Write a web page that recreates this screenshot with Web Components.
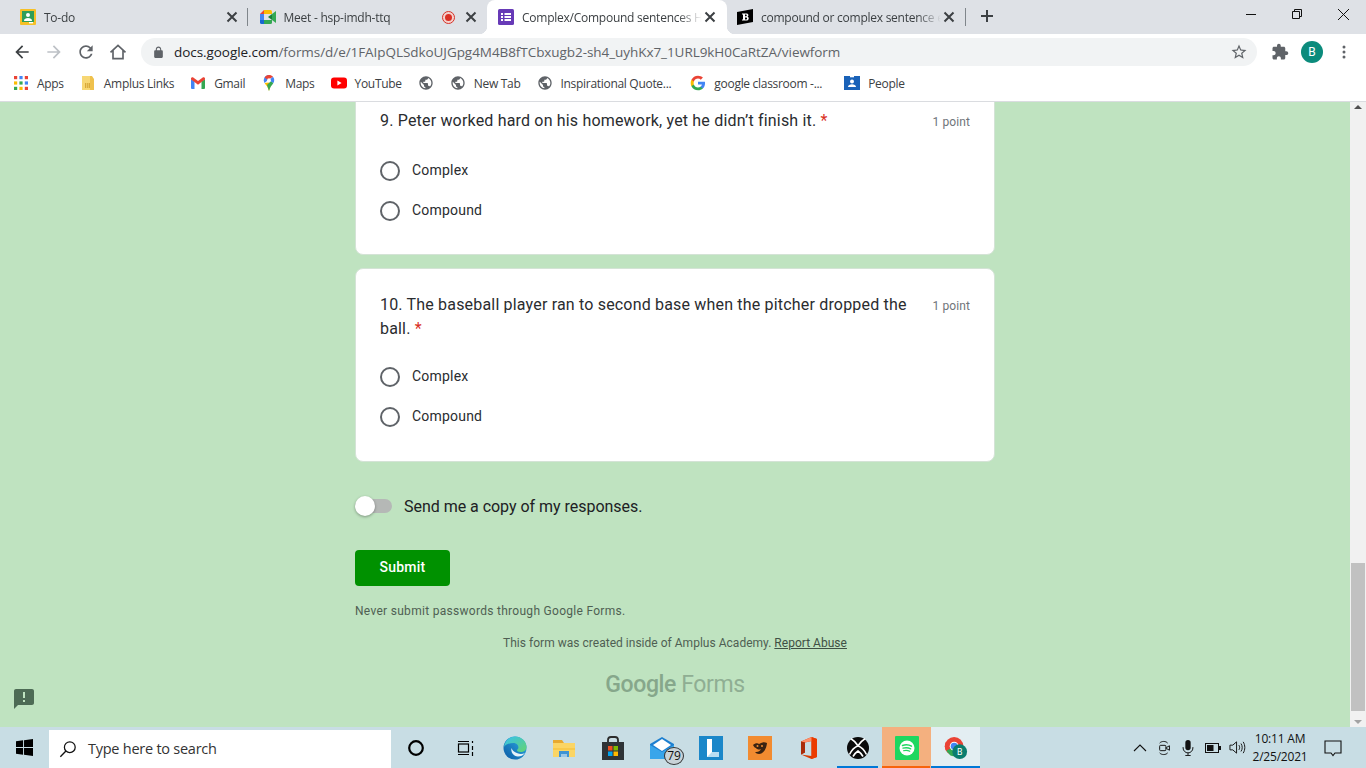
<!DOCTYPE html>
<html>
<head>
<meta charset="utf-8">
<title>Complex/Compound sentences</title>
<style>
    html, body { margin: 0; height: 100%; overflow: hidden; }
    body { display: flex; flex-direction: column; height: 768px; font-family: "Open Sans", "Liberation Sans", sans-serif; }
</style>
</head>
<body>
<tab-strip>
    <chrome-tab icon="classroom">To-do</chrome-tab>
    <chrome-tab icon="meet" recording hidesep>Meet - hsp-imdh-ttq</chrome-tab>
    <chrome-tab icon="forms" active hidesep>Complex/Compound sentences Homework</chrome-tab>
    <chrome-tab icon="brainly" tight>compound or complex sentence examples</chrome-tab>
</tab-strip>
<chrome-toolbar></chrome-toolbar>
<bookmark-bar>
    <bookmark-item icon="apps">Apps</bookmark-item>
    <bookmark-item icon="doc">Amplus Links</bookmark-item>
    <bookmark-item icon="gmail">Gmail</bookmark-item>
    <bookmark-item icon="maps">Maps</bookmark-item>
    <bookmark-item icon="youtube">YouTube</bookmark-item>
    <bookmark-item icon="globe"></bookmark-item>
    <bookmark-item icon="globe">New Tab</bookmark-item>
    <bookmark-item icon="globe">Inspirational Quote...</bookmark-item>
    <bookmark-item icon="google" pad>google classroom -...</bookmark-item>
    <bookmark-item icon="people">People</bookmark-item>
</bookmark-bar>
<form-page>
    <form-question points="1 point" first>
        <span slot="title">9. Peter worked hard on his homework, yet he didn’t finish it.</span>
        <form-radio>Complex</form-radio>
        <form-radio>Compound</form-radio>
    </form-question>
    <form-question points="1 point">
        <span slot="title">10. The baseball player ran to second base when the pitcher dropped the<br>ball.</span>
        <form-radio>Complex</form-radio>
        <form-radio>Compound</form-radio>
    </form-question>
    <form-footer></form-footer>
</form-page>
<task-bar></task-bar>

<script>
const ICONS = {
    classroom: `<svg viewBox="0 0 16 16"><rect width="16" height="16" rx="1" fill="#f6c026"/><rect x="2" y="2" width="12" height="11" fill="#2f9e58"/><circle cx="8" cy="6" r="2" fill="#fff"/><path d="M4 12c0-2.2 1.8-3 4-3s4 .8 4 3z" fill="#fff"/><rect x="9" y="13" width="4" height="1.4" fill="#fff"/></svg>`,
    meet: `<svg viewBox="0 0 16 16"><path d="M0 5 4 1v4z" fill="#ea4335"/><path d="M4 1h6.5A1.5 1.5 0 0 1 12 2.5V5H4z" fill="#fbbc04"/><path d="M0 5h4v6H0z" fill="#4285f4"/><path d="M0 11h4v4H1.5A1.5 1.5 0 0 1 0 13.500z" fill="#1967d2"/><path d="M4 11h8v2.500a1.500 1.500 0 0 1-1.500 1.500H4z" fill="#34a853"/><path d="M8 8l4-3v6z" fill="#188038"/><path d="M12 5l4-3v12l-4-3z" fill="#34a853"/></svg>`,
    forms: `<svg viewBox="0 0 16 16"><rect width="16" height="16" rx="1.500" fill="#673ab7"/><path d="M3 4h2v2H3zM6.500 4H13v2H6.500zM3 7h2v2H3zM6.500 7H13v2H6.500zM3 10h2v2H3zM6.500 10H13v2H6.500z" fill="#fff"/></svg>`,
    brainly: `<svg viewBox="0 0 16 16"><path d="M0 3 16 0v13L0 16z" fill="#000"/><path d="M5 4.500h4.500c2 0 2.600 2.400 1 3.200 2 .6 1.600 3.800-1 3.800H5v-1h1V5.500H5zm3 1v1.800h1c1 0 1-1.800 0-1.800zm0 2.900v2h1.200c1.200 0 1.200-2 0-2z" fill="#fff"/></svg>`,
    back: `<svg viewBox="0 0 24 24"><path fill="currentColor" d="M20 11H7.830l5.590-5.590L12 4l-8 8 8 8 1.410-1.410L7.830 13H20v-2z"/></svg>`,
    forward: `<svg viewBox="0 0 24 24"><path fill="currentColor" d="M12 4l-1.410 1.410L16.170 11H4v2h12.170l-5.580 5.590L12 20l8-8z"/></svg>`,
    reload: `<svg viewBox="0 0 24 24"><path fill="currentColor" d="M17.650 6.350C16.200 4.900 14.210 4 12 4c-4.420 0-7.990 3.580-7.990 8s3.570 8 7.990 8c3.730 0 6.840-2.550 7.730-6h-2.080c-.82 2.330-3.040 4-5.650 4-3.310 0-6-2.690-6-6s2.690-6 6-6c1.660 0 3.140.69 4.220 1.780L13 11h7V4l-2.350 2.350z"/></svg>`,
    home: `<svg viewBox="0 0 24 24"><path fill="none" stroke="currentColor" stroke-width="2" d="M3 12.500 12 4l9 8.500M6 10v10h12V10"/></svg>`,
    lock: `<svg viewBox="0 0 24 24"><path fill="currentColor" d="M18 8h-1V6c0-2.760-2.240-5-5-5S7 3.240 7 6v2H6c-1.100 0-2 .9-2 2v10c0 1.100.9 2 2 2h12c1.100 0 2-.9 2-2V10c0-1.100-.9-2-2-2zM9 6c0-1.660 1.340-3 3-3s3 1.340 3 3v2H9V6z"/></svg>`,
    star: `<svg viewBox="0 0 24 24"><path fill="currentColor" d="M22 9.240l-7.190-.62L12 2 9.190 8.630 2 9.240l5.460 4.730L5.820 21 12 17.270 18.180 21l-1.630-7.030L22 9.240zM12 15.400l-3.760 2.270 1-4.280-3.320-2.880 4.380-.38L12 6.100l1.710 4.040 4.380.38-3.320 2.880 1 4.280L12 15.400z"/></svg>`,
    puzzle: `<svg viewBox="0 0 24 24"><path fill="currentColor" d="M20.500 11H19V7c0-1.100-.9-2-2-2h-4V3.500C13 2.120 11.880 1 10.500 1S8 2.120 8 3.500V5H4c-1.100 0-1.990.9-1.990 2v3.800H3.500c1.490 0 2.700 1.210 2.700 2.700s-1.210 2.700-2.700 2.700H2V20c0 1.100.9 2 2 2h3.800v-1.500c0-1.490 1.210-2.700 2.700-2.700 1.490 0 2.700 1.210 2.700 2.700V22H17c1.100 0 2-.9 2-2v-4h1.500c1.380 0 2.500-1.120 2.500-2.500S21.880 11 20.500 11z"/></svg>`,
    dots: `<svg viewBox="0 0 16 16"><g fill="currentColor"><circle cx="8" cy="3" r="1.500"/><circle cx="8" cy="8" r="1.500"/><circle cx="8" cy="13" r="1.500"/></g></svg>`,
    apps: `<svg viewBox="0 0 16 16"><rect x="1" y="1" width="3.200" height="3.200" fill="#ea4335"/><rect x="6.400" y="1" width="3.200" height="3.200" fill="#4285f4"/><rect x="11.800" y="1" width="3.200" height="3.200" fill="#ea4335"/><rect x="1" y="6.400" width="3.200" height="3.200" fill="#fbbc04"/><rect x="6.400" y="6.400" width="3.200" height="3.200" fill="#34a853"/><rect x="11.800" y="6.400" width="3.200" height="3.200" fill="#4285f4"/><rect x="1" y="11.800" width="3.200" height="3.200" fill="#34a853"/><rect x="6.400" y="11.800" width="3.200" height="3.200" fill="#fbbc04"/><rect x="11.800" y="11.800" width="3.200" height="3.200" fill="#ea4335"/></svg>`,
    doc: `<svg viewBox="0 0 16 16"><path d="M2 1h10v14H2z" fill="#f7d774"/><path d="M10 1h2l2 3v11h-4z" fill="#efc14d"/><path d="M5 8h5v5H5z" fill="#d9a93a"/><path d="M6.500 8v5M8.300 8v5" stroke="#f7d774" stroke-width=".7"/></svg>`,
    gmail: `<svg viewBox="0 0 16 16"><path d="M1 14V4l3.500 2.600V14H2a1 1 0 0 1-1-1z" fill="#4285f4"/><path d="M15 14V4l-3.500 2.600V14H14a1 1 0 0 0 1-1z" fill="#34a853"/><path d="M1 4.500V3.600C1 2.400 2.300 1.800 3.300 2.500L8 6l4.700-3.500c1-.7 2.300-.1 2.300 1.100v.9l-3.500 2.600L8 9.700 4.500 7.100z" fill="#ea4335"/></svg>`,
    maps: `<svg viewBox="0 0 16 16"><path d="M8 0C5 0 2.800 2.300 2.800 5.200c0 1 .3 2 .8 2.700L8 4z" fill="#4285f4"/><path d="M8 0c-1 0-2 .3-2.800.8L3.600 2.500 7 5l5-3.300C11 .6 9.600 0 8 0z" fill="#ea4335"/><path d="M3.600 8c1.400 2.300 3.600 4 4.400 8l2-6.500-2.500-2z" fill="#fbbc04"/><path d="M8 16c.8-4 3-5.700 4.400-8L10 6 6 10z" fill="#34a853"/><path d="M12.400 8c.5-.8.8-1.800.8-2.800 0-1.300-.5-2.600-1.300-3.500L8 5.300z" fill="#4285f4"/><circle cx="8" cy="5.200" r="1.900" fill="#fff"/></svg>`,
    youtube: `<svg viewBox="0 0 16 16"><rect y="2.500" width="16" height="11" rx="3" fill="#f00"/><path d="M6.400 5.500v5L10.600 8z" fill="#fff"/></svg>`,
    globe: `<svg viewBox="0 0 24 24"><path fill="#5f6368" d="M12 2C6.480 2 2 6.480 2 12s4.480 10 10 10 10-4.480 10-10S17.520 2 12 2zm-1 17.930c-3.950-.49-7-3.850-7-7.930 0-.62.08-1.210.21-1.790L9 15v1c0 1.100.9 2 2 2v1.930zm6.900-2.540c-.26-.81-1-1.390-1.900-1.390h-1v-3c0-.55-.45-1-1-1H8v-2h2c.55 0 1-.45 1-1V7h2c1.100 0 2-.9 2-2v-.41c2.930 1.190 5 4.060 5 7.410 0 2.080-.8 3.970-2.100 5.390z"/></svg>`,
    google: `<svg viewBox="0 0 24 24"><path fill="#4285f4" d="M22.560 12.250c0-.78-.07-1.530-.2-2.250H12v4.260h5.920c-.26 1.370-1.040 2.530-2.210 3.310v2.770h3.570c2.080-1.920 3.280-4.740 3.280-8.090z"/><path fill="#34a853" d="M12 23c2.970 0 5.460-.98 7.280-2.660l-3.570-2.770c-.98.66-2.230 1.060-3.710 1.060-2.860 0-5.290-1.930-6.160-4.530H2.180v2.840C3.990 20.530 7.700 23 12 23z"/><path fill="#fbbc05" d="M5.840 14.090c-.22-.66-.35-1.360-.35-2.090s.13-1.430.35-2.090V7.070H2.180C1.430 8.550 1 10.220 1 12s.43 3.450 1.180 4.930l2.850-2.220.81-.62z"/><path fill="#ea4335" d="M12 5.380c1.620 0 3.060.56 4.210 1.640l3.150-3.150C17.450 2.090 14.970 1 12 1 7.700 1 3.990 3.470 2.180 7.070l3.660 2.840c.87-2.600 3.300-4.530 6.160-4.530z"/></svg>`,
    people: `<svg viewBox="0 0 16 16"><rect y="1" width="16" height="14" fill="#1a62b8"/><circle cx="8" cy="6.500" r="2" fill="#fff"/><path d="M4 12c0-1.900 2-2.700 4-2.700s4 .8 4 2.700z" fill="#fff"/><rect x="6" y="1" width="4" height="1.300" fill="#fff"/></svg>`,
    feedback: `<svg viewBox="0 0 24 24"><path fill="currentColor" d="M20 2H4c-1.100 0-2 .9-2 2v18l4-4h14c1.100 0 2-.9 2-2V4c0-1.100-.9-2-2-2zm-7 9h-2V5h2v6zm0 4h-2v-2h2v2z"/></svg>`,
    start: `<svg viewBox="0 0 18 18"><path fill="#000" d="M0 2.500 7.500 1.400V8.500H0zM8.500 1.300 18 0v8.500H8.500zM0 9.500H7.500V16.600L0 15.500zM8.500 9.500H18V18L8.500 16.700z"/></svg>`,
    search: `<svg viewBox="0 0 20 20"><circle cx="12" cy="8" r="6" fill="none" stroke="#111" stroke-width="1.400"/><path d="M7.700 12.300 1.500 18.500" stroke="#111" stroke-width="1.500"/></svg>`,
    cortana: `<svg viewBox="0 0 20 20"><circle cx="10" cy="10" r="6.800" fill="none" stroke="#000" stroke-width="2.200"/></svg>`,
    taskview: `<svg viewBox="0 0 20 20"><g fill="none" stroke="#000" stroke-width="1.200"><path d="M2 3.500h11M2 16.500h11"/><rect x="2.500" y="6" width="10" height="8"/><path d="M16.500 3v2M16.500 14v4M16.500 8v4" /></g></svg>`,
    edge: `<svg viewBox="0 0 24 24"><defs><linearGradient id="e1" x1="0" y1="1" x2="1" y2="0"><stop offset="0" stop-color="#0c59a4"/><stop offset="1" stop-color="#2fb2e8"/></linearGradient><linearGradient id="e2" x1="0" y1="0" x2="1" y2="1"><stop offset="0" stop-color="#35c1f1"/><stop offset="1" stop-color="#66d46f"/></linearGradient></defs><circle cx="12" cy="12" r="11.500" fill="url(#e1)"/><path d="M1 11C2 4 7 .5 12 .5c6 0 11.500 4.500 11.500 10.500 0 3-2.500 5-6 5-2.500 0-3.500-1-3.500-2 3-2 1-7-3.500-7C7 7 3 8 1 11z" fill="url(#e2)"/><path d="M8.500 12c-1 4 2 8.500 6.500 8.500 3 0 5-1 7-3.500-2 1-5 1.300-7.500.3-3.500-1.300-5.500-3-6-5.300z" fill="#fff" opacity=".9"/></svg>`,
    folder: `<svg viewBox="0 0 24 24"><path d="M1 4h9l2 3H1z" fill="#e8a92f"/><path d="M1 7h22v14H1z" fill="#fbd564"/><path d="M1 12h22v2H1z" fill="#f8c94a"/><path d="M7 15h10v6h-2v-3H9v3H7z" fill="#3f93d4"/><path d="M9 18h6v3H9z" fill="#9dc7e6"/></svg>`,
    store: `<svg viewBox="0 0 24 24"><path d="M7 7V4a3 3 0 0 1 3-3h4a3 3 0 0 1 3 3v3" fill="none" stroke="#2b2b2b" stroke-width="1.800"/><path d="M1 6h22v18H1z" fill="#2f3336"/><rect x="7" y="10" width="4.500" height="4.500" fill="#f25022"/><rect x="12.500" y="10" width="4.500" height="4.500" fill="#7fba00"/><rect x="7" y="15.500" width="4.500" height="4.500" fill="#00a4ef"/><rect x="12.500" y="15.500" width="4.500" height="4.500" fill="#ffb900"/></svg>`,
    mail: `<svg viewBox="0 0 24 22"><path d="M12 0 24 7v15H0V7z" fill="#1d7fd0"/><path d="M3 8 12 2l9 6-9 6z" fill="#fff"/><path d="M0 8 12 15 24 8v14H0z" fill="#39a5ea"/></svg>`,
    lapp: `<svg viewBox="0 0 24 24"><rect width="24" height="24" fill="#1b87c9"/><path d="M8 3h5v13h7v5H8z" fill="#fff"/><path d="M13 16h7v5H8z" fill="#b9def2"/></svg>`,
    orange: `<svg viewBox="0 0 24 24"><rect width="24" height="24" fill="#f28b30"/><path d="M5 9c2-2 5-2 6-1l2-1c2-1 4-1 6 0-.5 5-3 11-8 11-2 0-3-1-4-2 3 .5 5-1 6-3-2 1-4 .5-5-1-1 0-2-1-3-3z" fill="#3a2312"/><circle cx="9.500" cy="10" r="1" fill="#f28b30"/><circle cx="14" cy="10" r="1" fill="#f28b30"/></svg>`,
    office: `<svg viewBox="0 0 24 24"><path d="M4 5.500 14.500 1 20 3v18l-5.500 2L4 18.500l10.500 1.500V5L8 6.500v10L4 18.500z" fill="#d83b01"/><path d="M14.500 1 20 3v18l-5.500 2z" fill="#eb3c00"/><path d="M14.500 1v4L8 6.500 4 5.500z" fill="#ff8f6b"/><path d="M4 5.500 8 6.500v10L4 18.500z" fill="#a92b0a"/></svg>`,
    xbox: `<svg viewBox="0 0 24 24"><circle cx="12" cy="12" r="11" fill="#0b0b0b"/><g fill="none" stroke="#fff" stroke-width="1.600"><path d="M5 2.800C8 4.500 10.500 7.500 12 9.800 13.500 7.500 16 4.500 19 2.800"/><path d="M3.500 18.500C5.500 14.500 9 11 12 9.800c3 1.200 6.500 4.700 8.500 8.700"/><path d="M7 20.500c1.500-2.500 3.500-4.500 5-5.500 1.500 1 3.500 3 5 5.500" /></g></svg>`,
    spotify: `<svg viewBox="0 0 24 24"><rect width="24" height="24" rx="1" fill="#1ed760"/><circle cx="12" cy="12" r="7.500" fill="#fff"/><g fill="none" stroke="#1ed760" stroke-linecap="round"><path d="M7.500 9.500c3-1 6.500-.8 9 .7" stroke-width="1.500"/><path d="M8 12.200c2.500-.7 5.500-.5 7.700.7" stroke-width="1.300"/><path d="M8.500 14.700c2-.5 4.500-.4 6.300.6" stroke-width="1.100"/></g></svg>`,
    chrome: `<svg viewBox="0 0 26 26"><circle cx="11" cy="11" r="10" fill="#ea4335"/><path d="M11 11 2.300 16 7 21c1 .5 2.500.9 4 .9z" fill="#34a853"/><path d="M11 11h10c0 3-1 5.500-3 7.500L11 22z" fill="#fbbc04"/><path d="M2.300 16A10 10 0 0 1 2.300 6L7 13z" fill="#ea4335"/><circle cx="11" cy="11" r="4.800" fill="#fff"/><circle cx="11" cy="11" r="3.700" fill="#4285f4"/><circle cx="17" cy="17" r="8" fill="#0b7d6e"/><text x="17" y="20.500" text-anchor="middle" font-family="Roboto, sans-serif" font-size="9.500" fill="#fff">B</text></svg>`,
    cam: `<svg viewBox="0 0 16 18"><g fill="none" stroke="#111" stroke-width="1.100"><path d="M2 3.500C4 1 9 1 11 3.500M2 14.500c2 2.500 7 2.500 9 0"/><rect x="2" y="6" width="7" height="6" rx="1"/><path d="M9.500 8.500 13 6.500v5l-3.500-2z"/></g></svg>`,
    mic: `<svg viewBox="0 0 16 18"><rect x="5" y="0" width="6" height="11.500" rx="3" fill="#111"/><path d="M2.500 8v1a5.500 5.500 0 0 0 11 0V8M8 14.500V17M5 17.500h6" fill="none" stroke="#111" stroke-width="1.100"/></svg>`,
    battery: `<svg viewBox="0 0 16 16"><rect x=".5" y="3.500" width="13" height="9" fill="none" stroke="#111"/><rect x="2" y="5" width="6.500" height="6" fill="#111"/><rect x="14" y="6" width="2" height="4" fill="#111"/></svg>`,
    volume: `<svg viewBox="0 0 18 16"><g fill="none" stroke="#111" stroke-width="1"><path d="M1 5.500h3L8 2v12l-4-3.500H1z"/><path d="M10.500 5.500c1 1.500 1 3.500 0 5M12.700 3.800c1.700 2.500 1.700 6 0 8.400M15 2c2.300 3.500 2.300 8.500 0 12"/></g></svg>`,
    chevron: `<svg viewBox="0 0 14 8"><path d="M1 7l6-6 6 6" fill="none" stroke="#111" stroke-width="1.100"/></svg>`,
    notify: `<svg viewBox="0 0 18 18"><path d="M1 2h16v12h-6l-2 2.500L7 14H1z" fill="none" stroke="#111" stroke-width="1.100"/></svg>`
};

class UiIcon extends HTMLElement {
    connectedCallback() {
        const size = this.getAttribute('size') || 16;
        this.attachShadow({ mode: 'open' }).innerHTML = `
            <style>
                :host { display: block; width: ${size}px; height: ${size}px; flex: none; }
                svg { display: block; width: 100%; height: 100%; }
            </style>
            ${ICONS[this.getAttribute('name')] || ''}
        `;
    }
}
customElements.define('ui-icon', UiIcon);

class TabStrip extends HTMLElement {
    constructor() {
        super();
        this.attachShadow({ mode: 'open' }).innerHTML = `
            <style>
                :host { display: flex; height: 34px; flex: none; background: #dee1e6; padding-left: 8px; }
                .tabs { display: flex; }
                .plus { width: 16px; height: 16px; margin: 8px 0 0 12.500px; }
                .plus svg, .win svg { display: block; }
                .win { margin-left: auto; display: flex; }
                .win div { width: 46px; height: 28px; display: flex; align-items: center; justify-content: center; }
            </style>
            <div class="tabs"><slot></slot></div>
            <div class="plus"><svg width="16" height="16" viewBox="0 0 16 16"><path d="M8 2v12M2 8h12" stroke="#3c4043" stroke-width="2"/></svg></div>
            <div class="win">
                <div><svg width="10" height="10" viewBox="0 0 10 10"><path d="M0 5.500h10" stroke="#111"/></svg></div>
                <div><svg width="10" height="10" viewBox="0 0 10 10"><path d="M.5 2.500h7v7h-7zM2.500 2.500v-2h7v7h-2" fill="none" stroke="#111"/></svg></div>
                <div><svg width="11" height="11" viewBox="0 0 11 11"><path d="M0 0l11 11M11 0 0 11" stroke="#111"/></svg></div>
            </div>
        `;
    }
}
customElements.define('tab-strip', TabStrip);

class ChromeTab extends HTMLElement {
    constructor() {
        super();
        this.attachShadow({ mode: 'open' });
    }

    connectedCallback() {
        const rec = this.hasAttribute('recording');
        this.shadowRoot.innerHTML = `
            <style>
                :host {
                    display: flex; align-items: center; box-sizing: border-box;
                    width: 239.500px; height: 34px; padding: 0 8px 0 12px;
                    position: relative; font-size: 12px; letter-spacing: -.25px; color: #3c4043;
                }
                :host([active]) { background: #fff; border-radius: 8px 8px 0 0; padding: 0 9px 0 11px; }
                :host([tight]) { padding: 0 9px 0 10.500px; }
                :host([active])::before, :host([active])::after {
                    content: ""; position: absolute; bottom: 0; width: 8px; height: 8px;
                }
                :host([active])::before { left: -8px; background: radial-gradient(circle at 0 0, transparent 8px, #fff 8.500px); }
                :host([active])::after { right: -8px; background: radial-gradient(circle at 100% 0, transparent 8px, #fff 8.500px); }
                .sep { position: absolute; right: 0; top: 8px; height: 18px; width: 1px; background: #80868b; }
                :host([hidesep]) .sep { display: none; }
                .label {
                    flex: 1; min-width: 0; margin-left: 8px; white-space: nowrap; overflow: hidden;
                    -webkit-mask-image: linear-gradient(90deg, #000 calc(100% - 24px), transparent);
                    mask-image: linear-gradient(90deg, #000 calc(100% - 24px), transparent);
                }
                .rec {
                    width: 7px; height: 7px; border-radius: 50%; background: #d93025; flex: none;
                    border: 2px solid #f6d0cc; outline: 1px solid #d93025; margin: 0 9px 0 0;
                }
                .close { width: 16px; height: 16px; flex: none; }
                .close svg { display: block; }
            </style>
            <ui-icon name="${this.getAttribute('icon')}"></ui-icon>
            <span class="label"><slot></slot></span>
            ${rec ? '<span class="rec"></span>' : ''}
            <span class="close"><svg width="16" height="16" viewBox="0 0 16 16"><path d="M3.500 3.500l9 9M12.500 3.500l-9 9" stroke="#3c4043" stroke-width="2"/></svg></span>
            <span class="sep"></span>
        `;
    }
}
customElements.define('chrome-tab', ChromeTab);

class ChromeToolbar extends HTMLElement {
    constructor() {
        super();
        this.attachShadow({ mode: 'open' }).innerHTML = `
            <style>
                :host { display: flex; align-items: center; height: 36px; flex: none; background: #fff; color: #5f6368; padding-left: 12px; }
                .nav { width: 32px; display: flex; }
                .nav.off { color: #bdc1c6; }
                .dark { color: #3c4043; }
                .omni {
                    display: flex; align-items: center; width: 1116px; height: 28px; margin-left: 13px;
                    box-sizing: border-box; padding: 0 9px 0 11px; border-radius: 14px; background: #f1f3f4;
                }
                .url {
                    margin-left: 9px; font: 13.500px/28px "Open Sans", sans-serif; letter-spacing: -.06px;
                    color: #5f6368; white-space: nowrap; flex: 1;
                }
                .url b { font-weight: 400; color: #202124; }
                .puzzle { margin-left: 14px; }
                .avatar {
                    width: 22px; height: 22px; margin-left: 12px; border-radius: 50%; background: #0b8b7c;
                    color: #fff; font: 12px/22px Roboto, sans-serif; text-align: center;
                }
                .menu { margin-left: 13px; color: #5f6368; }
            </style>
            <div class="nav dark"><ui-icon name="back" size="20"></ui-icon></div>
            <div class="nav off"><ui-icon name="forward" size="20"></ui-icon></div>
            <div class="nav"><ui-icon name="reload" size="20"></ui-icon></div>
            <div class="nav" style="width:auto"><ui-icon name="home" size="20"></ui-icon></div>
            <div class="omni">
                <ui-icon name="lock" size="13"></ui-icon>
                <span class="url"><b>docs.google.com</b>/forms/d/e/1FAIpQLSdkoUJGpg4M4B8fTCbxugb2-sh4_uyhKx7_1URL9kH0CaRtZA/viewform</span>
                <ui-icon name="star" size="18"></ui-icon>
            </div>
            <ui-icon class="puzzle" name="puzzle" size="18"></ui-icon>
            <div class="avatar">B</div>
            <ui-icon class="menu" name="dots" size="16"></ui-icon>
        `;
    }
}
customElements.define('chrome-toolbar', ChromeToolbar);

class BookmarkBar extends HTMLElement {
    constructor() {
        super();
        this.attachShadow({ mode: 'open' }).innerHTML = `
            <style>
                :host {
                    display: flex; align-items: center; height: 32px; flex: none; box-sizing: border-box;
                    background: #fff; border-bottom: 1px solid #dadce0; padding: 0 0 5px 13px;
                }
            </style>
            <slot></slot>
        `;
    }
}
customElements.define('bookmark-bar', BookmarkBar);

class BookmarkItem extends HTMLElement {
    constructor() {
        super();
        this.attachShadow({ mode: 'open' });
    }

    connectedCallback() {
        this.shadowRoot.innerHTML = `
            <style>
                :host { display: flex; align-items: center; gap: 8px; margin-right: 16px; font-size: 12px; letter-spacing: -.3px; color: #3c4043; white-space: nowrap; }
                :host([pad]) { margin-left: 3px; margin-right: 22px; }
                :host(:empty) { gap: 0; }
            </style>
            <ui-icon name="${this.getAttribute('icon')}"></ui-icon>
            <slot></slot>
        `;
    }
}
customElements.define('bookmark-item', BookmarkItem);

class FormPage extends HTMLElement {
    constructor() {
        super();
        this.attachShadow({ mode: 'open' }).innerHTML = `
            <style>
                :host { display: flex; flex: 1; min-height: 0; position: relative; background: #bfe3c0; overflow: hidden; }
                .scroll { flex: 1; min-width: 0; display: flex; flex-direction: column; align-items: center; }
                .col { width: 640px; display: flex; flex-direction: column; }
                .fb { position: absolute; left: 12px; bottom: 16px; color: #4d6b55; }
                .bar { width: 16px; flex: none; background: #f1f1f1; display: flex; flex-direction: column; align-items: center; justify-content: space-between; box-sizing: border-box; padding: 3px 0; }
                .thumb { position: absolute; right: 1px; top: 461px; width: 14px; height: 148px; background: #c1c1c1; }
                .arrow { width: 0; height: 0; border: 4px solid transparent; }
                .up { border-bottom: 4px solid #505050; border-top: 0; }
                .down { border-top: 4px solid #a3a3a3; border-bottom: 0; }
            </style>
            <div class="scroll"><div class="col"><slot></slot></div></div>
            <div class="bar"><span class="arrow up"></span><span class="arrow down"></span></div>
            <div class="thumb"></div>
            <ui-icon class="fb" name="feedback" size="24"></ui-icon>
        `;
    }
}
customElements.define('form-page', FormPage);

class FormQuestion extends HTMLElement {
    constructor() {
        super();
        this.attachShadow({ mode: 'open' });
    }

    connectedCallback() {
        this.shadowRoot.innerHTML = `
            <style>
                :host {
                    display: block; box-sizing: border-box; background: #fff; border: 1px solid #d4e3d6;
                    border-radius: 8px; padding: 24px; margin-bottom: 13px;
                }
                :host([first]) { margin-top: -18px; padding-bottom: 23px; }
                .head { display: flex; margin-bottom: 16px; }
                :host([first]) .head { margin-bottom: 17px; }
                .title {
                    flex: 1; padding-right: 24px; font: 400 16px/24px Roboto, sans-serif; letter-spacing: .18px; color: #2a2c2f;
                }
                .req { color: #d93025; }
                .pts { margin-top: 1px; font: 12px/24px Roboto, sans-serif; letter-spacing: .1px; color: #70757a; white-space: nowrap; }
            </style>
            <div class="head">
                <div class="title"><slot name="title"></slot> <span class="req">*</span></div>
                <div class="pts">${this.getAttribute('points')}</div>
            </div>
            <slot></slot>
        `;
    }
}
customElements.define('form-question', FormQuestion);

class FormRadio extends HTMLElement {
    constructor() {
        super();
        this.attachShadow({ mode: 'open' }).innerHTML = `
            <style>
                :host { display: flex; align-items: center; height: 40px; font: 14px Roboto, sans-serif; letter-spacing: .2px; color: #2a2c2f; }
                .dot { box-sizing: border-box; width: 20px; height: 20px; border: 2px solid #5f6368; border-radius: 50%; margin-right: 12px; }
                .text { margin-top: -2px; }
            </style>
            <span class="dot"></span><span class="text"><slot></slot></span>
        `;
    }
}
customElements.define('form-radio', FormRadio);

class FormFooter extends HTMLElement {
    constructor() {
        super();
        this.attachShadow({ mode: 'open' }).innerHTML = `
            <style>
                :host { display: block; font-family: Roboto, sans-serif; color: #202124; }
                .copy { display: flex; align-items: center; height: 24px; margin-top: 19px; font-size: 16px; letter-spacing: -.03px; }
                .switch { position: relative; width: 37px; height: 14px; background: #b5b8b6; border-radius: 7px; margin-right: 12px; box-sizing: border-box; }
                .knob { position: absolute; left: 0; top: -3px; width: 20px; height: 20px; border-radius: 50%; background: #fff; box-shadow: 0 1px 3px rgba(0,0,0,.35); }
                .submit {
                    display: block; width: 95px; height: 36px; margin-top: 32px; border-radius: 4px; background: #009100;
                    color: #fff; font: 500 14px/35px Roboto, sans-serif; letter-spacing: .2px; text-align: center;
                }
                .never { margin-top: 17px; font-size: 12px; line-height: 16px; letter-spacing: .29px; color: #4f5f53; }
                .made { margin-top: 16px; font-size: 12px; line-height: 16px; letter-spacing: .02px; color: #4f5f53; text-align: center; }
                .made u { color: #3f5045; }
                .logo { margin-top: 20px; font: 400 23px/28px Roboto, sans-serif; color: #8fae93; text-align: center; letter-spacing: -.4px; }
                .logo b { font-weight: 500; color: #86a78b; }
            </style>
            <div class="copy"><div class="switch"><div class="knob"></div></div>Send me a copy of my responses.</div>
            <div class="submit">Submit</div>
            <div class="never">Never submit passwords through Google Forms.</div>
            <div class="made">This form was created inside of Amplus Academy. <u>Report Abuse</u></div>
            <div class="logo"><b>Google</b> Forms</div>
        `;
    }
}
customElements.define('form-footer', FormFooter);

class TaskButton extends HTMLElement {
    constructor() {
        super();
        this.attachShadow({ mode: 'open' });
    }

    connectedCallback() {
        this.shadowRoot.innerHTML = `
            <style>
                :host { display: flex; align-items: center; justify-content: center; width: 49px; height: 41px; position: relative; flex: none; box-sizing: border-box; }
                :host([open])::after { content: ""; position: absolute; left: 4px; right: 4px; bottom: 0; height: 2px; background: #0078d7; }
                :host([state="flash"]) { background: #f4b07f; }
                :host([state="flash"])::after { content: ""; position: absolute; left: 0; right: 1px; bottom: 0; height: 2px; background: #f7630c; }
                :host([state="focus"]) { background: #e3eef2; }
                :host([state="focus"])::after { content: ""; position: absolute; left: 0; right: 0; bottom: 0; height: 2px; background: #0078d7; }
                .badge {
                    position: absolute; left: 27px; top: 20px; width: 20px; height: 18px; border-radius: 50%; background: #c9d3d8;
                    border: 1px solid #333; box-sizing: border-box; font: 12px/16px "Open Sans", sans-serif; text-align: center; color: #111;
                }
            </style>
            <ui-icon name="${this.getAttribute('icon')}" size="${this.getAttribute('size') || 24}"></ui-icon>
            ${this.hasAttribute('badge') ? `<span class="badge">${this.getAttribute('badge')}</span>` : ''}
        `;
    }
}
customElements.define('task-button', TaskButton);

class TaskBar extends HTMLElement {
    constructor() {
        super();
        this.attachShadow({ mode: 'open' }).innerHTML = `
            <style>
                :host { display: flex; align-items: center; height: 41px; flex: none; background: #c8dde4; }
                .start { width: 49px; display: flex; justify-content: center; }
                .search {
                    display: flex; align-items: center; width: 342px; height: 38px; margin-top: 2px; box-sizing: border-box;
                    background: #fff; padding-left: 10px; font: 14.500px "Open Sans", sans-serif; letter-spacing: -.25px; color: #333;
                }
                .search span { margin-left: 11px; }
                .tray { margin-left: auto; display: flex; align-items: center; }
                .clock { width: 68px; text-align: center; font: 12px/18px "Open Sans", sans-serif; letter-spacing: -.2px; color: #111; }
            </style>
            <div class="start"><ui-icon name="start" size="17"></ui-icon></div>
            <div class="search"><ui-icon name="search" size="18"></ui-icon><span>Type here to search</span></div>
            <task-button icon="cortana" size="20" style="width:50px"></task-button>
            <task-button icon="taskview" size="20" style="width:49px"></task-button>
            <task-button icon="edge"></task-button>
            <task-button icon="folder"></task-button>
            <task-button icon="store"></task-button>
            <task-button icon="mail" badge="79"></task-button>
            <task-button icon="lapp"></task-button>
            <task-button icon="orange"></task-button>
            <task-button icon="office"></task-button>
            <task-button icon="xbox" open></task-button>
            <task-button icon="spotify" state="flash"></task-button>
            <task-button icon="chrome" state="focus"></task-button>
            <div class="tray">
                <ui-icon name="chevron" size="14"></ui-icon>
                <ui-icon name="cam" size="16" style="margin-left:10px"></ui-icon>
                <ui-icon name="mic" size="16" style="margin-left:7px"></ui-icon>
                <ui-icon name="battery" size="16" style="margin-left:9px"></ui-icon>
                <ui-icon name="volume" size="17" style="margin-left:8px"></ui-icon>
                <div class="clock">10:11 AM<br>2/25/2021</div>
                <ui-icon name="notify" size="18" style="margin:0 24px 0 10px"></ui-icon>
            </div>
        `;
    }
}
customElements.define('task-bar', TaskBar);
</script>
</body>
</html>
